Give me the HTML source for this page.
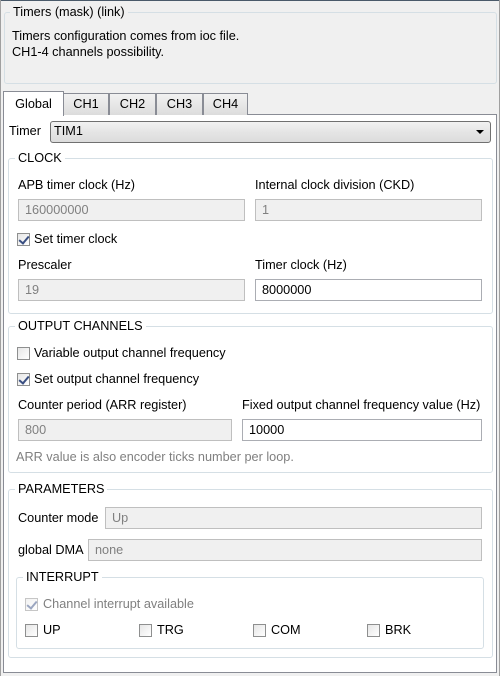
<!DOCTYPE html>
<html><head><meta charset="utf-8"><style>
*{box-sizing:border-box;margin:0;padding:0}
body{width:500px;height:676px;background:#f0f0f0;font-family:"Liberation Sans",sans-serif;font-size:12.7px;color:#000;position:relative;overflow:hidden}
.a{position:absolute}
.t{position:absolute;white-space:nowrap;line-height:15px}
.g{position:absolute;border:1px solid #d5dfe5;border-radius:3px}
.gt{position:absolute;white-space:nowrap;line-height:15px;padding:0 3px;background:#fff}
.in{position:absolute;height:22px;border:1px solid #abadb3;background:#fff;line-height:20px;padding-left:6px;white-space:nowrap}
.dis{background:#f0f0f0;color:#808080;border-color:#bfbfbf}
.cb{position:absolute;width:13px;height:13px;border:1px solid #8e8f8f;background:linear-gradient(135deg,#e6e6e6,#fff)}
.ck::after{content:"";position:absolute;left:3px;top:0px;width:4px;height:8px;border:solid #3a4f82;border-width:0 2px 2px 0;transform:rotate(40deg)}
.tab{position:absolute;top:93px;height:22px;border:1px solid #898c95;border-bottom:none;background:linear-gradient(#f2f2f2,#dcdcdc);text-align:center;line-height:20px}
</style></head><body>
<div class="a" style="left:0;top:0;width:500px;height:1px;background:#4a5a6a"></div>
<div class="a" style="left:0;top:0;width:1px;height:676px;background:#a0a0a0"></div>
<div class="a" style="left:499px;top:0;width:1px;height:676px;background:#a0a0a0"></div>
<div class="a" style="left:4px;top:12px;width:493px;height:72px;border:1px solid #d5dfe5;border-radius:3px"></div>
<div class="t" style="left:10px;top:5px;padding:0 3px;background:#f0f0f0">Timers (mask) (link)</div>
<div class="t" style="left:12px;top:29px">Timers configuration comes from ioc file.</div>
<div class="t" style="left:12px;top:45px">CH1-4 channels possibility.</div>
<div class="a" style="left:3px;top:114px;width:494px;height:559px;background:#fff;border:1px solid #898c95"></div>
<div class="tab" style="left:63px;width:46px">CH1</div>
<div class="tab" style="left:109px;width:47px">CH2</div>
<div class="tab" style="left:156px;width:47px">CH3</div>
<div class="tab" style="left:203px;width:45px">CH4</div>
<div class="tab" style="left:3px;top:91px;width:61px;height:25px;background:#fff;line-height:24px">Global</div>
<div class="t" style="left:9px;top:124px">Timer</div>
<div class="a" style="left:50px;top:121px;width:441px;height:22px;border:1px solid #707070;border-radius:3px;background:linear-gradient(#f2f2f2,#e5e5e5 50%,#dcdcdc)"></div>
<div class="t" style="left:54px;top:124px">TIM1</div>
<div class="a" style="left:476px;top:130px;width:0;height:0;border-left:4px solid transparent;border-right:4px solid transparent;border-top:4px solid #000"></div>
<div class="g" style="left:8px;top:158px;width:485px;height:156px"></div>
<div class="gt" style="left:15px;top:151px">CLOCK</div>
<div class="t" style="left:18px;top:178px">APB timer clock (Hz)</div>
<div class="t" style="left:255px;top:178px">Internal clock division (CKD)</div>
<div class="in dis" style="left:18px;top:199px;width:227px">160000000</div>
<div class="in dis" style="left:255px;top:199px;width:227px">1</div>
<div class="cb ck" style="left:17px;top:233px"></div>
<div class="t" style="left:34px;top:232px">Set timer clock</div>
<div class="t" style="left:18px;top:258px">Prescaler</div>
<div class="t" style="left:255px;top:258px">Timer clock (Hz)</div>
<div class="in dis" style="left:18px;top:279px;width:227px">19</div>
<div class="in" style="left:255px;top:279px;width:227px">8000000</div>
<div class="g" style="left:8px;top:326px;width:485px;height:147px"></div>
<div class="gt" style="left:15px;top:319px">OUTPUT CHANNELS</div>
<div class="cb" style="left:17px;top:347px"></div>
<div class="t" style="left:34px;top:346px">Variable output channel frequency</div>
<div class="cb ck" style="left:17px;top:373px"></div>
<div class="t" style="left:34px;top:372px">Set output channel frequency</div>
<div class="t" style="left:18px;top:398px">Counter period (ARR register)</div>
<div class="t" style="left:242px;top:398px">Fixed output channel frequency value (Hz)</div>
<div class="in dis" style="left:18px;top:419px;width:214px">800</div>
<div class="in" style="left:242px;top:419px;width:240px">10000</div>
<div class="t" style="left:16px;top:450px;color:#808080">ARR value is also encoder ticks number per loop.</div>
<div class="g" style="left:8px;top:489px;width:485px;height:169px"></div>
<div class="gt" style="left:15px;top:482px">PARAMETERS</div>
<div class="t" style="left:18px;top:511px">Counter mode</div>
<div class="in dis" style="left:105px;top:507px;width:377px">Up</div>
<div class="t" style="left:18px;top:543px">global DMA</div>
<div class="in dis" style="left:88px;top:539px;width:394px">none</div>
<div class="g" style="left:16px;top:577px;width:468px;height:72px"></div>
<div class="gt" style="left:23px;top:570px">INTERRUPT</div>
<div class="cb ck" style="left:25px;top:598px;opacity:.5"></div>
<div class="t" style="left:43px;top:597px;color:#808080">Channel interrupt available</div>
<div class="cb" style="left:25px;top:624px"></div><div class="t" style="left:43px;top:623px">UP</div>
<div class="cb" style="left:139px;top:624px"></div><div class="t" style="left:157px;top:623px">TRG</div>
<div class="cb" style="left:253px;top:624px"></div><div class="t" style="left:271px;top:623px">COM</div>
<div class="cb" style="left:367px;top:624px"></div><div class="t" style="left:385px;top:623px">BRK</div>
</body></html>
